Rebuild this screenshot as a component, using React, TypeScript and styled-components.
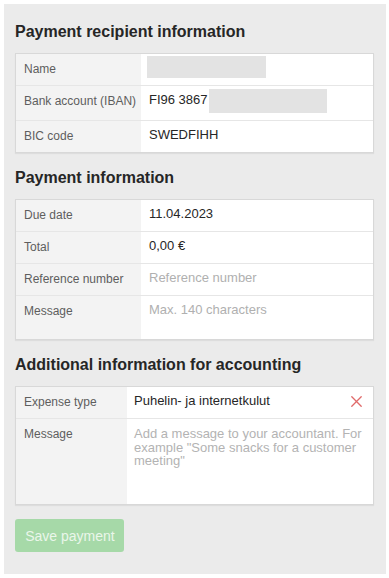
import React from "react";
import styled, { createGlobalStyle } from "styled-components";

const Global = createGlobalStyle`
  html, body { margin: 0; padding: 0; background: #ffffff; }
  body { font-family: "Liberation Sans", Arial, Helvetica, sans-serif; }
  * { box-sizing: border-box; }
`;

const Panel = styled.div`
  margin: 4px 3px 6px 4px;
  padding: 19px 12px 22px 11px;
  background: #ebebeb;
  display: flex;
  flex-direction: column;
`;

const Heading = styled.h2<{ $first?: boolean }>`
  margin: ${(p) => (p.$first ? "0" : "16px")} 0 12px 0;
  font-size: 16px;
  line-height: 18px;
  font-weight: bold;
  color: #262626;
`;

const Table = styled.div`
  background: #ffffff;
  border: 1px solid #d8d8d8;
  box-shadow: 0 1px 1px rgba(0, 0, 0, 0.06);
  display: flex;
  flex-direction: column;
`;

const Row = styled.div<{ $label: number; $h: number }>`
  display: grid;
  grid-template-columns: ${(p) => p.$label}px 1fr;
  min-height: ${(p) => p.$h}px;
  border-bottom: 1px solid #e6e6e6;
  &:last-child { border-bottom: none; }
`;

const Label = styled.div`
  background: #f3f3f3;
  color: #5e5e5e;
  font-size: 12px;
  line-height: 16px;
  padding: 7px 8px 8px;
  white-space: nowrap;
`;

const Value = styled.div<{ $placeholder?: boolean; $pl?: number }>`
  display: flex;
  align-items: flex-start;
  padding: 6px 8px 7px ${(p) => p.$pl ?? 8}px;
  font-size: 13px;
  line-height: 16px;
  color: ${(p) => (p.$placeholder ? "#b0b0b0" : "#262626")};
`;

const ValueText = styled.span`
  flex: 1;
`;

const Multiline = styled.div`
  padding: 8px 10px 8px 7px;
  font-size: 13px;
  line-height: 13.6px;
  color: #b3b3b3;
`;

const Redacted = styled.span<{ $w: number; $h: number; $mt: number; $ml: number }>`
  display: inline-block;
  width: ${(p) => p.$w}px;
  height: ${(p) => p.$h}px;
  margin-top: ${(p) => p.$mt}px;
  margin-left: ${(p) => p.$ml}px;
  background: #e3e3e3;
`;

const ClearIcon = styled.svg`
  width: 11px;
  height: 11px;
  margin-top: 3px;
  margin-right: 3px;
  flex: none;
`;

const Actions = styled.div`
  margin-top: 14px;
  display: flex;
`;

const SaveButton = styled.button`
  width: 109px;
  height: 33px;
  border: none;
  border-radius: 3px;
  background: #a6d9a8;
  color: #eaf6ea;
  font-family: "Liberation Sans", Arial, Helvetica, sans-serif;
  font-size: 14px;
  padding: 0 0 0 1px;
  cursor: default;
`;

export default function App() {
  return (
    <>
      <Global />
      <Panel>
        <Heading $first>Payment recipient information</Heading>
        <Table>
          <Row $label={125} $h={31}>
            <Label>Name</Label>
            <Value $pl={6}>
              <Redacted $w={119} $h={22} $mt={-4} $ml={0} />
            </Value>
          </Row>
          <Row $label={125} $h={31}>
            <Label>Bank account (IBAN)</Label>
            <Value>
              FI96 3867
              <Redacted $w={118} $h={24} $mt={-3} $ml={1} />
            </Value>
          </Row>
          <Row $label={125} $h={31}>
            <Label>BIC code</Label>
            <Value>SWEDFIHH</Value>
          </Row>
        </Table>

        <Heading>Payment information</Heading>
        <Table>
          <Row $label={125} $h={31}>
            <Label>Due date</Label>
            <Value>11.04.2023</Value>
          </Row>
          <Row $label={125} $h={31}>
            <Label>Total</Label>
            <Value>0,00 €</Value>
          </Row>
          <Row $label={125} $h={31}>
            <Label>Reference number</Label>
            <Value $placeholder>Reference number</Value>
          </Row>
          <Row $label={125} $h={43}>
            <Label>Message</Label>
            <Value $placeholder>Max. 140 characters</Value>
          </Row>
        </Table>

        <Heading>Additional information for accounting</Heading>
        <Table>
          <Row $label={111} $h={32}>
            <Label>Expense type</Label>
            <Value $pl={7}>
              <ValueText>Puhelin- ja internetkulut</ValueText>
              <ClearIcon viewBox="0 0 11 11" aria-label="Clear">
                <path
                  d="M0.8 0.8 L10.2 10.2 M10.2 0.8 L0.8 10.2"
                  stroke="#e06a6a"
                  strokeWidth="1.3"
                  strokeLinecap="round"
                  fill="none"
                />
              </ClearIcon>
            </Value>
          </Row>
          <Row $label={111} $h={85}>
            <Label>Message</Label>
            <Multiline>
              Add a message to your accountant. For example "Some snacks for a
              customer meeting"
            </Multiline>
          </Row>
        </Table>

        <Actions>
          <SaveButton disabled>Save payment</SaveButton>
        </Actions>
      </Panel>
    </>
  );
}
